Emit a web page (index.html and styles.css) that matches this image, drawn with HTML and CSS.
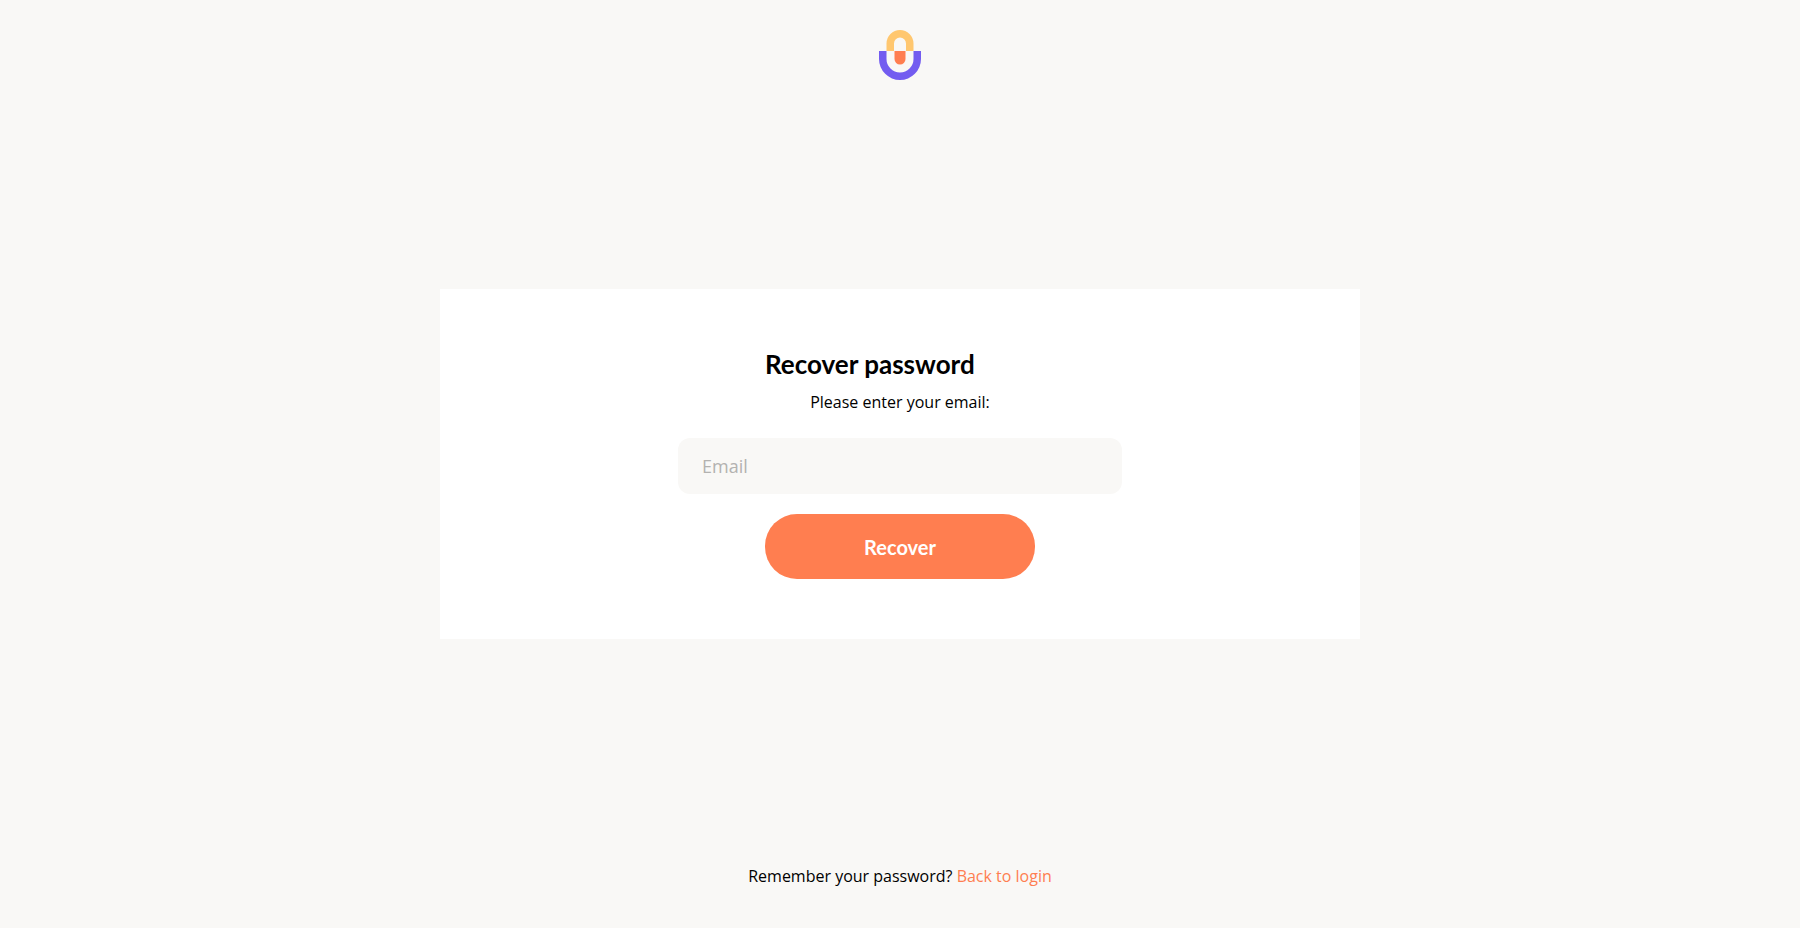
FILE: index.html
```html
<!DOCTYPE html>
<html lang="en">
<head>
<meta charset="utf-8">
<meta name="viewport" content="width=device-width, initial-scale=1">
<title>Recover password</title>
<link rel="stylesheet" href="styles.css">
</head>
<body>
<div class="page">
  <header class="header">
    <svg class="logo" viewBox="0 0 42 50" role="img" aria-label="Logo">
      <path fill="#ffc76f" d="M7.5 21V13.5a13.5 13.5 0 0 1 27 0V21H27V13.5a6 6 0 0 0-12 0V21z"/>
      <path fill="#ff7e50" d="M15.5 21h11v8a5.5 5.5 0 0 1-11 0z"/>
      <path fill="#735cf0" d="M0 21h7.5v8a13.5 13.5 0 0 0 27 0v-8H42v8a21 21 0 0 1-42 0z"/>
    </svg>
  </header>
  <main class="card">
    <form class="form">
      <h1 class="title">Recover password</h1>
      <label class="hint" for="email">Please enter your email:</label>
      <input class="field" id="email" type="email" placeholder="Email">
      <button class="submit" type="submit">Recover</button>
    </form>
  </main>
  <footer class="footer">
    <p class="note">Remember your password? <a class="link" href="#login">Back to login</a></p>
  </footer>
</div>
</body>
</html>
```
FILE: styles.css
```css
* {
  box-sizing: border-box;
}

body {
  margin: 0;
  background: #f9f8f6;
  color: #000;
  font: 16px/24px "Open Sans", sans-serif;
}

.page {
  display: grid;
  grid-template-rows: 1fr auto 1fr;
  justify-items: center;
  min-height: 100vh;
}

.header {
  padding-top: 30px;
}

.logo {
  display: block;
  width: 42px;
  height: 50px;
}

.card {
  width: 100%;
  max-width: 920px;
  padding: 60px 20px;
  background: #fff;
}

.form {
  display: flex;
  flex-direction: column;
  align-items: center;
}

.title {
  width: 270px;
  margin: 0 0 11px;
  font: 700 26px/30px Lato, sans-serif;
}

.hint {
  margin-bottom: 24px;
}

.field {
  width: 100%;
  max-width: 444px;
  height: 56px;
  margin-bottom: 20px;
  padding: 0 24px;
  border: 0;
  border-radius: 12px;
  background: #f9f8f6;
  color: #000;
  font: 18px/24px "Open Sans", sans-serif;
}

.field::placeholder {
  color: #b3b2b0;
  opacity: 1;
}

.submit {
  width: 270px;
  height: 65px;
  border: 0;
  border-radius: 32px;
  background: #ff7e50;
  color: #fff;
  font: 700 20px/24px Lato, sans-serif;
  cursor: pointer;
}

.footer {
  align-self: end;
  padding-bottom: 40px;
}

.note {
  margin: 0;
}

.link {
  color: #ff7e50;
  text-decoration: none;
}
```
